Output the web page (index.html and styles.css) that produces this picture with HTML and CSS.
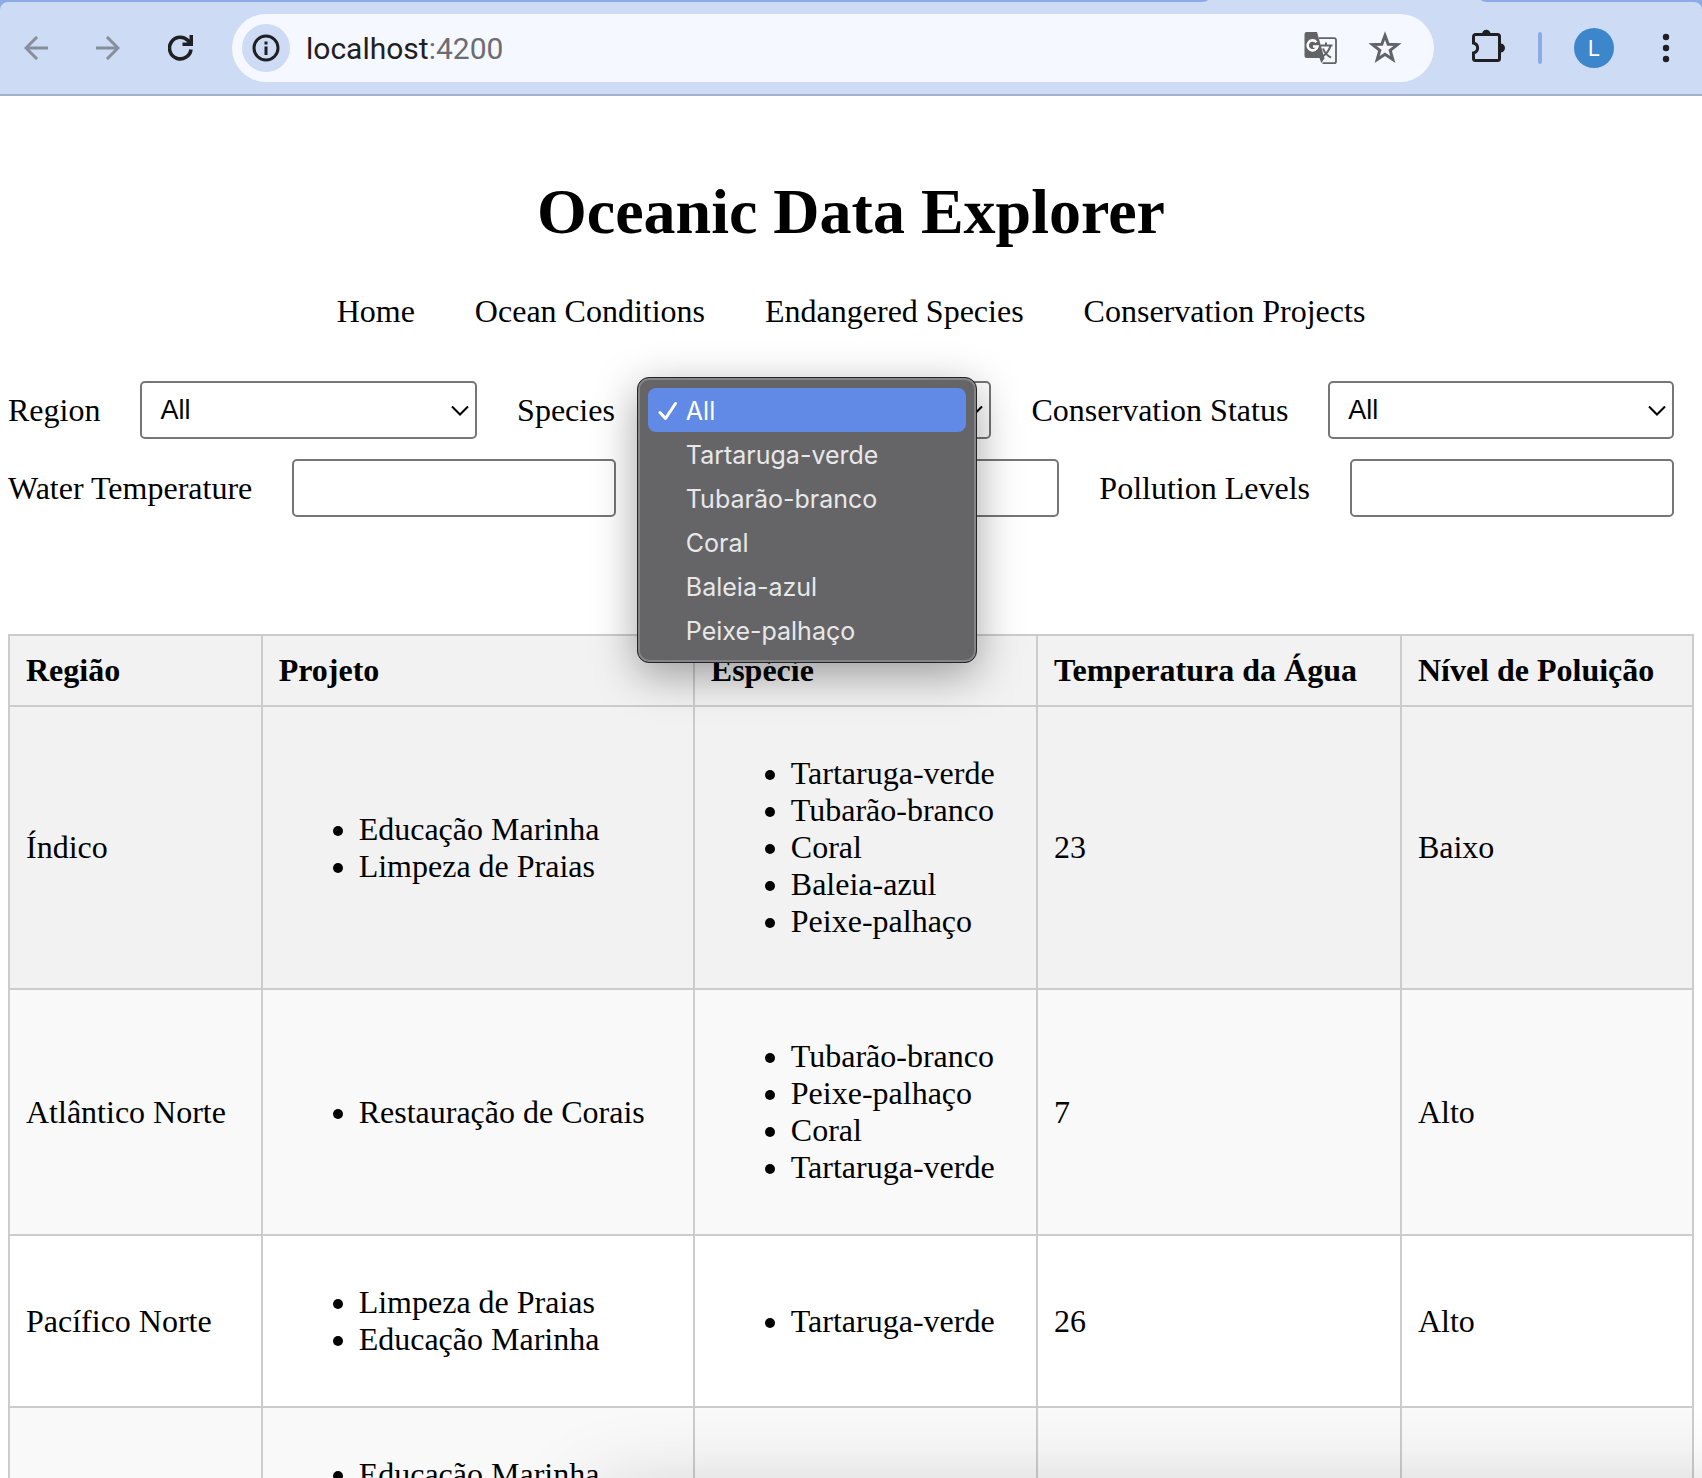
FILE: index.html
```html
<!DOCTYPE html>
<html lang="en">
<head>
<meta charset="utf-8">
<title>Oceanic Data Explorer</title>
<link rel="stylesheet" href="styles.css">
</head>
<body>
<div class="window">
  <header class="browser">
    <div class="tabstrip"><span class="tabs-before"></span><span class="tabs-after"></span></div>
    <div class="toolbar">
      <div class="nav-buttons">
        <button class="tool faded" aria-label="Back"><svg width="24" height="24" viewBox="0 0 24 24" fill="none" stroke="currentColor" stroke-width="3"><path d="M24 12H2M13 1 2 12l11 11"/></svg></button>
        <button class="tool faded" aria-label="Forward"><svg width="24" height="24" viewBox="0 0 24 24" fill="none" stroke="currentColor" stroke-width="3"><path d="M0 12h22M11 1l11 11-11 11"/></svg></button>
        <button class="tool" aria-label="Reload"><svg width="25" height="26" viewBox="0 0 25 26" fill="none" stroke="currentColor" stroke-width="3.6"><path d="M23 14.500A10.800 10.800 0 1 1 20 5.500L22.500 8.500M23.300 0v9.300H14.500"/></svg></button>
      </div>
      <div class="omnibox">
        <button class="site-info" aria-label="View site information"><svg width="28" height="28" viewBox="0 0 28 28"><circle cx="14" cy="14" r="12" fill="none" stroke="currentColor" stroke-width="3"/><path d="M12.500 12.500h3v8.500h-3zM12.500 7.500h3v3h-3z" fill="currentColor"/></svg></button>
        <div class="address" role="textbox" aria-label="Address">localhost<span class="port">:4200</span></div>
        <button class="tool grey" aria-label="Translate this page"><svg width="34" height="34" viewBox="0 0 34 34"><path d="M15 7.200h15a2 2 0 0 1 2 2v21a2 2 0 0 1-2 2H18.500" fill="none" stroke="currentColor" stroke-width="1.800"/><path d="M2.500 1h10.500l7.500 26.500L17.300 32 15.500 27H2.500a2 2 0 0 1-2-2V3a2 2 0 0 1 2-2z" fill="currentColor"/><path d="M12.500 11.200A5 5 0 1 0 13.500 15.500H9" fill="none" stroke="#fff" stroke-width="2.600"/><path d="M16.500 14.500h12M22 11.500v3M26.500 14.500c-1 5-5 9-8.500 11.500M19 17.500c1.500 4 5 7.500 8 9" fill="none" stroke="currentColor" stroke-width="2"/></svg></button>
        <button class="tool grey" aria-label="Bookmark this tab"><svg width="34" height="34" viewBox="0 0 34 34" fill="none" stroke="currentColor" stroke-width="3"><path d="M17 4.500l3.200 8.700 9.300.4-7.300 5.800 2.600 9-7.800-5.200-7.800 5.200 2.600-9-7.300-5.800 9.300-.4z"/></svg></button>
      </div>
      <div class="actions">
        <button class="tool" aria-label="Extensions"><svg width="35" height="38" viewBox="0 0 35 38"><path d="M4.500 5.500h22a2 2 0 0 1 2 2v22a2 2 0 0 1-2 2h-22a2 2 0 0 1-2-2v-5.500c5.500-1.500 5.500-8.500 0-10V7.500a2 2 0 0 1 2-2z" fill="none" stroke="currentColor" stroke-width="3"/><path d="M11 5a4.300 4.300 0 0 1 8.600 0zM29.500 14.500a4.500 4.500 0 0 1 0 9z" fill="currentColor"/></svg></button>
        <span class="divider"></span>
        <button class="avatar" aria-label="Profile">L</button>
        <button class="tool" aria-label="Menu"><svg width="8" height="30" viewBox="0 0 8 30" fill="currentColor"><circle cx="4" cy="4" r="3.200"/><circle cx="4" cy="15" r="3.200"/><circle cx="4" cy="26" r="3.200"/></svg></button>
      </div>
    </div>
  </header>

  <main class="page">
    <h1 class="title">Oceanic Data Explorer</h1>
    <nav class="menu">
      <a href="#home">Home</a>
      <a href="#conditions">Ocean Conditions</a>
      <a href="#species">Endangered Species</a>
      <a href="#projects">Conservation Projects</a>
    </nav>

    <form class="filters">
      <div class="filter-row">
        <label for="region">Region</label>
        <div class="field">
          <select id="region" class="control"><option>All</option></select>
          <svg class="chevron" width="18" height="12" viewBox="0 0 18 12"><path d="M1 1.500l8 8 8-8"/></svg>
        </div>
        <label for="species">Species</label>
        <div class="field">
          <select id="species" class="control"><option>All</option></select>
          <svg class="chevron" width="18" height="12" viewBox="0 0 18 12"><path d="M1 1.500l8 8 8-8"/></svg>
          <ul class="popup" role="listbox" aria-label="Species">
            <li class="option selected" role="option" aria-selected="true"><svg class="check" width="20" height="20" viewBox="0 0 20 20"><path d="M2 11.500l5.500 6L17.500 2.500"/></svg>All</li>
            <li class="option" role="option">Tartaruga-verde</li>
            <li class="option" role="option">Tubarão-branco</li>
            <li class="option" role="option">Coral</li>
            <li class="option" role="option">Baleia-azul</li>
            <li class="option" role="option">Peixe-palhaço</li>
          </ul>
        </div>
        <label for="status">Conservation Status</label>
        <div class="field field-wide">
          <select id="status" class="control"><option>All</option></select>
          <svg class="chevron" width="18" height="12" viewBox="0 0 18 12"><path d="M1 1.500l8 8 8-8"/></svg>
        </div>
      </div>
      <div class="filter-row">
        <label for="temperature">Water Temperature</label>
        <div class="field"><input id="temperature" class="control" type="text"></div>
        <label for="ph">pH</label>
        <div class="field"><input id="ph" class="control" type="text"></div>
        <label for="pollution">Pollution Levels</label>
        <div class="field"><input id="pollution" class="control" type="text"></div>
      </div>
    </form>

    <table class="data">
      <thead>
        <tr><th>Região</th><th>Projeto</th><th>Espécie</th><th>Temperatura da Água</th><th>Nível de Poluição</th></tr>
      </thead>
      <tbody>
        <tr class="active">
          <td>Índico</td>
          <td><ul><li>Educação Marinha</li><li>Limpeza de Praias</li></ul></td>
          <td><ul><li>Tartaruga-verde</li><li>Tubarão-branco</li><li>Coral</li><li>Baleia-azul</li><li>Peixe-palhaço</li></ul></td>
          <td>23</td>
          <td>Baixo</td>
        </tr>
        <tr>
          <td>Atlântico Norte</td>
          <td><ul><li>Restauração de Corais</li></ul></td>
          <td><ul><li>Tubarão-branco</li><li>Peixe-palhaço</li><li>Coral</li><li>Tartaruga-verde</li></ul></td>
          <td>7</td>
          <td>Alto</td>
        </tr>
        <tr>
          <td>Pacífico Norte</td>
          <td><ul><li>Limpeza de Praias</li><li>Educação Marinha</li></ul></td>
          <td><ul><li>Tartaruga-verde</li></ul></td>
          <td>26</td>
          <td>Alto</td>
        </tr>
        <tr>
          <td></td>
          <td><ul><li>Educação Marinha</li></ul></td>
          <td></td>
          <td></td>
          <td></td>
        </tr>
      </tbody>
    </table>
  </main>
  <div class="edge-shadow"></div>
</div>
</body>
</html>
```
FILE: styles.css
```css
* { box-sizing: border-box; }

body {
  margin: 0;
  background: #fff;
  color: #000;
  font-family: "Liberation Serif", "Times New Roman", serif;
  font-size: 32px;
  line-height: 37px;
}

.window {
  position: relative;
  height: 100vh;
  overflow: hidden;
  display: flex;
  flex-direction: column;
}

button {
  border: 0;
  padding: 0;
  background: none;
  color: inherit;
  font: inherit;
}

svg { display: block; }

/* Browser chrome */
.browser {
  flex: none;
  background: #8caae6;
  color: #1f2023;
  font-family: Inter, sans-serif;
}

.tabstrip {
  display: flex;
  justify-content: space-between;
  height: 2px;
  background: #cedbf5;
}

.tabs-before {
  flex: none;
  width: 71%;
  background: #8caae6;
  border-bottom-right-radius: 10px 2px;
}

.tabs-after {
  width: 13%;
  background: #8caae6;
  border-bottom-left-radius: 10px 2px;
}

.toolbar {
  display: flex;
  align-items: center;
  height: 94px;
  padding: 0 32px 0 24px;
  background: #cedbf5;
  border-bottom: 2px solid #a5b1cb;
  border-radius: 8px 8px 0 0;
}

.nav-buttons {
  display: flex;
  align-items: center;
  gap: 48px;
  margin-right: 39px;
}

.faded { color: #868d9c; }
.grey { color: #616366; }

.omnibox {
  flex: 1;
  display: flex;
  align-items: center;
  gap: 30px;
  height: 68px;
  padding: 0 32px 0 10px;
  border-radius: 34px;
  background: #f5f8fe;
}

.site-info {
  display: grid;
  place-items: center;
  width: 48px;
  height: 48px;
  margin-right: -14px;
  border-radius: 50%;
  background: #cedbf5;
}

.address {
  flex: 1;
  font-family: Roboto, sans-serif;
  font-size: 30px;
}

.port { color: #6b6d71; }

.actions {
  display: flex;
  align-items: center;
  gap: 32px;
  margin-left: 37px;
}

.divider {
  width: 4px;
  height: 32px;
  border-radius: 2px;
  background: #8caae6;
}

.avatar {
  width: 40px;
  height: 40px;
  margin-right: 16px;
  border-radius: 50%;
  background: #3c87cb;
  color: #fff;
  font-size: 22px;
}

/* Page */
.page { padding: 79px 8px 0; }

.title {
  margin: 0 0 44px;
  font-size: 64px;
  line-height: 74px;
  text-align: center;
}

.menu {
  display: flex;
  justify-content: center;
  gap: 60px;
}

.menu a {
  color: #000;
  text-decoration: none;
}

.filters {
  display: grid;
  gap: 20px;
  margin: 51px 20px 117px 0;
}

.filter-row {
  display: flex;
  align-items: center;
  gap: 40px;
}

.filter-row label { white-space: nowrap; }

.field {
  position: relative;
  flex: 1 1 200px;
}

.field-wide { flex-basis: 209px; }

.control {
  display: block;
  width: 100%;
  height: 58px;
  margin: 0;
  padding: 0 18px;
  border: 2px solid #767676;
  border-radius: 5px;
  background: #fff;
  color: #000;
  font-family: "Liberation Sans", Arial, sans-serif;
  font-size: 27px;
  appearance: none;
}

.chevron {
  position: absolute;
  top: 24px;
  right: 8px;
  pointer-events: none;
}

.chevron path {
  fill: none;
  stroke: #000;
  stroke-width: 2;
}

.popup {
  position: absolute;
  z-index: 2;
  top: -4px;
  left: -18px;
  right: 14px;
  margin: 0;
  padding: 10px;
  list-style: none;
  border: 1px solid #242426;
  border-radius: 12px;
  background: #656567;
  box-shadow: inset 0 0 0 2px #858587, 0 12px 44px rgba(0, 0, 0, 0.36);
}

.option {
  position: relative;
  height: 44px;
  padding-left: 38px;
  border-radius: 8px;
  color: #e8e8e9;
  font-family: Inter, sans-serif;
  font-size: 25px;
  line-height: 46px;
}

.selected {
  background: #618ae6;
  color: #fff;
}

.check {
  position: absolute;
  top: 13px;
  left: 10px;
}

.check path {
  fill: none;
  stroke: #fff;
  stroke-width: 3;
  stroke-linecap: round;
  stroke-linejoin: round;
}

.data {
  width: 100%;
  border-collapse: collapse;
}

.data th,
.data td {
  padding: 16px;
  border: 2px solid #ccc;
  text-align: left;
}

.data th { background: #f2f2f2; }
.data tbody tr:nth-child(even) { background: #f9f9f9; }
.data tbody .active { background: #f2f2f2; }

.data ul {
  margin: 32px 0;
  padding-left: 80px;
}

/* Shade cast along the lower edge of the window */
.edge-shadow {
  position: absolute;
  top: 100%;
  left: 35%;
  right: -10%;
  height: 80px;
  margin-top: 24px;
  box-shadow: 0 0 90px rgba(0, 0, 0, 0.24);
  pointer-events: none;
}
```
